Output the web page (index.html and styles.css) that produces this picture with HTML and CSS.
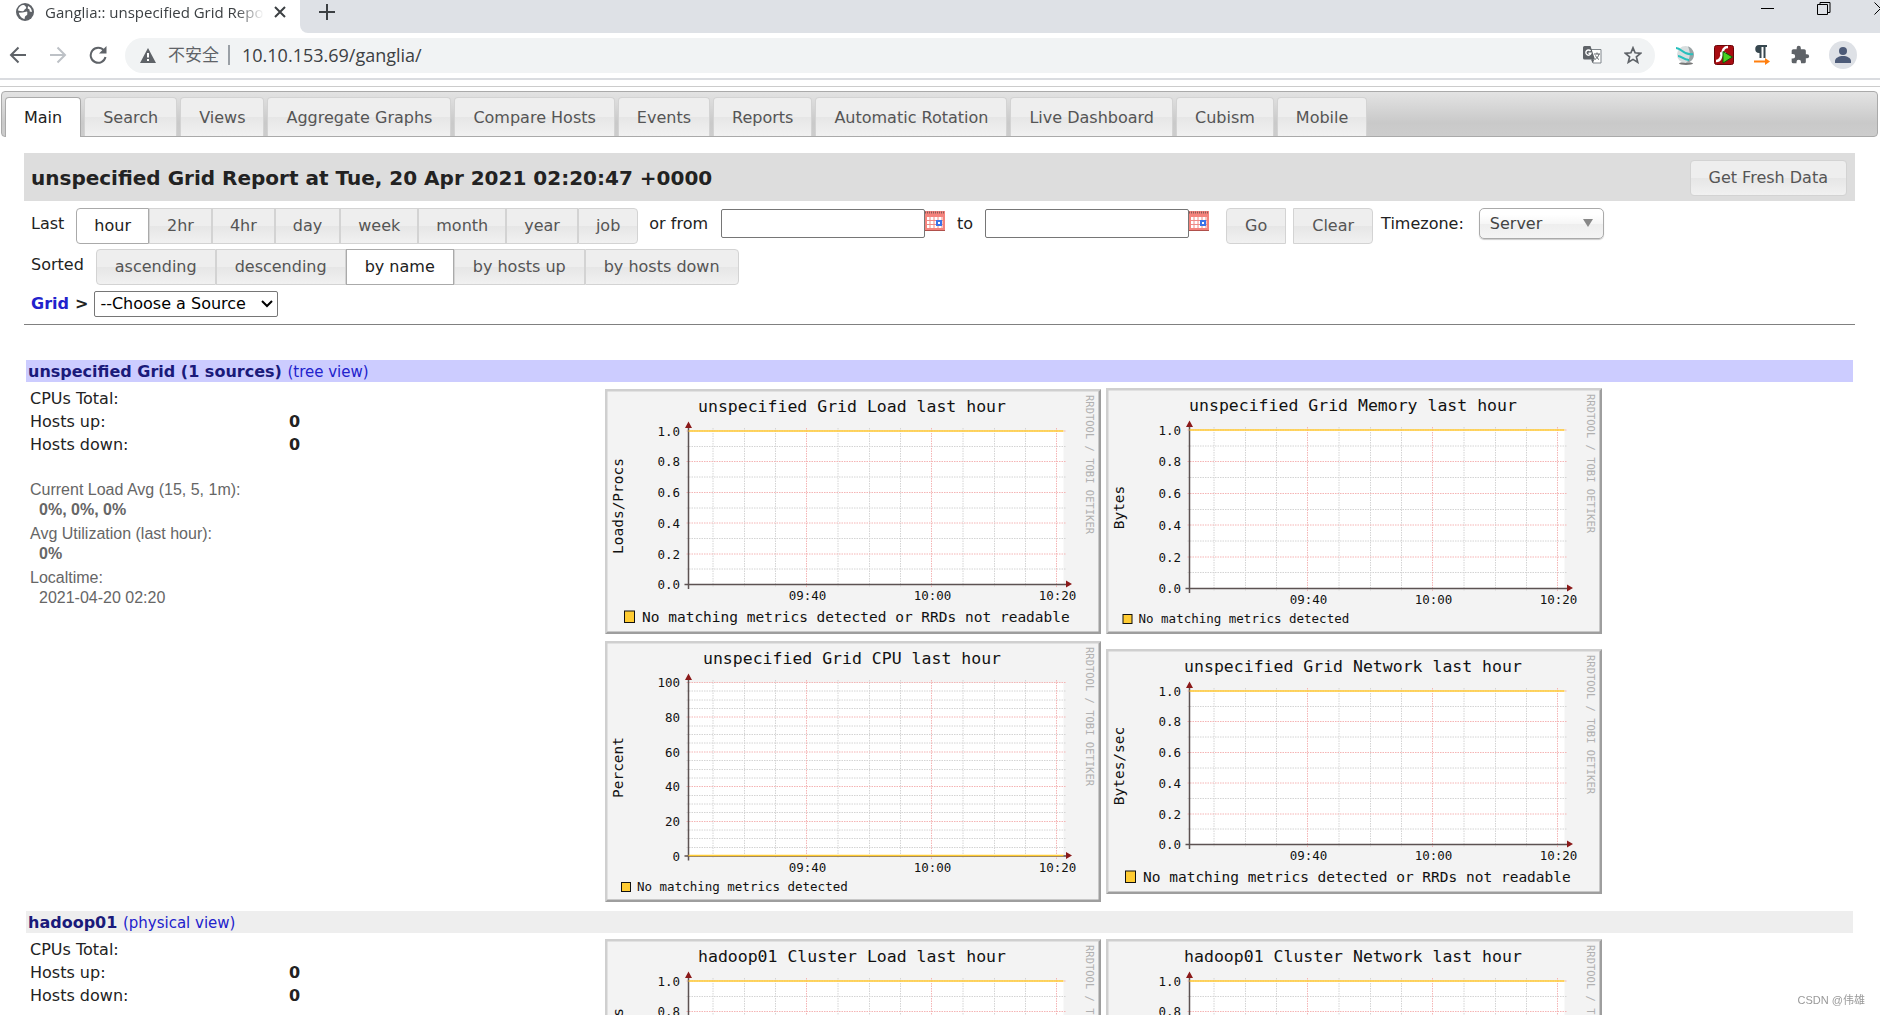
FILE: index.html
```html
<!DOCTYPE html>
<html lang="en">
<head>
<meta charset="utf-8">
<title>Ganglia:: unspecified Grid Report</title>
<link rel="stylesheet" href="styles.css">
</head>
<body>
<header class="browser">
  <div class="tabstrip">
    <div class="tab">
      <svg class="favicon" viewBox="0 0 18 18"><circle cx="9" cy="9" r="9" fill="#5f6368"/><path d="M8 2C5 2 2.500 4 2 7.500c2 .5 3.500 1 5 .8 1.500-.3 1-2 2.300-2.300C10.500 5.500 11 4 8 2zM11 8.500c-1.500 0-2.500 1-4.500 1l-3.700.3C3.500 13 6 15.800 8.500 16c.5-1 0-2.200 1-3 1.200-.6 2-1.200 1.800-2.300-.1-.8.4-1.200-.3-2.200zM12 3l-.3 2.500 1.800 1 .2 2 2.200.5C16 6.500 14.500 4.200 12 3z" fill="#fff"/></svg>
      <span class="tab-title">Ganglia:: unspecified Grid Report</span>
      <button class="icon-btn" aria-label="Close tab"><svg width="12" height="12" viewBox="0 0 12 12"><path d="M1 1l10 10M11 1L1 11" stroke="#3c4043" stroke-width="2"/></svg></button>
    </div>
    <div class="strip-rest">
      <button class="icon-btn new-tab" aria-label="New tab"><svg width="16" height="16" viewBox="0 0 16 16"><path d="M8 0v16M0 8h16" stroke="#3c4043" stroke-width="2"/></svg></button>
      <div class="window-controls">
        <button class="icon-btn" aria-label="Minimize"><svg width="13" height="14" viewBox="0 0 13 14"><path d="M0 6.500h13" stroke="#000"/></svg></button>
        <button class="icon-btn" aria-label="Restore"><svg width="14" height="14" viewBox="0 0 14 14" fill="none" stroke="#000"><path d="M.5 2.500h10v10H.5zM3 2.500v-2h10v10h-2.500"/></svg></button>
        <button class="icon-btn" aria-label="Close"><svg width="13" height="14" viewBox="0 0 13 14"><path d="M.5 .5l12 12M12.500 .5l-12 12" stroke="#000"/></svg></button>
      </div>
    </div>
  </div>
  <div class="toolbar">
    <button class="icon-btn" aria-label="Back"><svg width="18" height="18" viewBox="0 0 18 18" fill="none" stroke="#5f6368" stroke-width="2"><path d="M17 9H2M9.500 1.500L2 9l7.500 7.500"/></svg></button>
    <button class="icon-btn" aria-label="Forward"><svg width="18" height="18" viewBox="0 0 18 18" fill="none" stroke="#bdc1c6" stroke-width="2"><path d="M1 9h15M8.500 1.500L16 9l-7.500 7.500"/></svg></button>
    <button class="icon-btn" aria-label="Reload"><svg width="18" height="18" viewBox="0 0 18 18"><path d="M15 4.500A7.500 7.500 0 1 0 16.500 11" fill="none" stroke="#5f6368" stroke-width="2"/><path d="M17.500 0v7.500H10z" fill="#5f6368"/></svg></button>
    <div class="omnibox">
      <svg width="16" height="15" viewBox="0 0 16 15"><path d="M8 0l8 15H0z" fill="#5f6368"/><path d="M8 5v4.500M8 11v2" stroke="#fff" stroke-width="2"/></svg>
      <span class="insecure">不安全</span>
      <input class="url" type="text" aria-label="Address" value="10.10.153.69/ganglia/">
      <button class="icon-btn" aria-label="Translate"><svg width="19" height="18" viewBox="0 0 19 18"><path d="M8 3.500h10v13.500h-8z" fill="#fff" stroke="#80868b"/><path d="M1.500 0h6l4.500 13.500H1.500A1.500 1.500 0 0 1 0 12V1.500A1.500 1.500 0 0 1 1.500 0z" fill="#5f6368"/><path d="M8 13.500h3.500l-2 3.500z" fill="#5f6368"/><path d="M7.500 5A2.600 2.600 0 1 0 8 7.200H5.500" fill="none" stroke="#fff" stroke-width="1.400"/><path d="M11 8h6M14 6.500V8M16 8c-.5 2.500-2 4-4 5.500M12.500 9.500c1 2 2 3 3.500 4" fill="none" stroke="#5f6368"/></svg></button>
      <button class="icon-btn" aria-label="Bookmark"><svg width="18" height="18" viewBox="0 0 18 18"><path d="M9 1.800l2.100 5 5.500.5-4.200 3.600 1.300 5.400L9 13.400l-4.700 2.900 1.300-5.400-4.200-3.600 5.500-.5z" fill="none" stroke="#5f6368" stroke-width="1.700"/></svg></button>
    </div>
    <div class="extensions">
      <button class="icon-btn" aria-label="Planet"><svg width="20" height="20" viewBox="0 0 20 20"><ellipse cx="11" cy="18.500" rx="7" ry="1.500" fill="#777"/><circle cx="10.500" cy="9.500" r="8.500" fill="#d8dedf"/><path d="M13 1.500a8.500 8.500 0 0 1 4 13.500c-2 2-4 3-6 3 4-3 5-10 2-16.500z" fill="#9aa3a5"/><path d="M1 3c6 0 7 8 17 6M3 11c4 0 5 4 11 4" fill="none" stroke="#27c0bd" stroke-width="2"/></svg></button>
      <button class="icon-btn" aria-label="Flash player"><svg width="20" height="20" viewBox="0 0 20 20"><rect x=".5" y=".5" width="19" height="19" rx="2" fill="#a80d12" stroke="#6b0508"/><path d="M14 2c-6 0-5 6-7 10-1 3-2 4-5 4M6 8.500h6" fill="none" stroke="#fff" stroke-width="2.500"/><path d="M9 6.500l9.500 5.500L9 18z" fill="#4bd321" stroke="#0b5c08"/></svg></button>
      <button class="icon-btn" aria-label="Paragraph direction"><svg width="18" height="20" viewBox="0 0 18 20"><path d="M6 0h8v2h-1.500v11h-2V2H8.500v11h-2V8A4 4 0 0 1 6 0z" fill="#37474f"/><path d="M1 16.500h12" stroke="#ff7f0e" stroke-width="2"/><path d="M12 13l5 3.500-5 3.500z" fill="#ff7f0e"/></svg></button>
      <button class="icon-btn" aria-label="Extensions"><svg width="20" height="20" viewBox="0 0 24 24"><path d="M20.500 11H19V7a2 2 0 0 0-2-2h-4V3.500a2.500 2.500 0 0 0-5 0V5H4a2 2 0 0 0-2 2v3.800h1.500a2.700 2.700 0 0 1 0 5.400H2V20a2 2 0 0 0 2 2h3.800v-1.500a2.700 2.700 0 0 1 5.400 0V22H17a2 2 0 0 0 2-2v-4h1.500a2.500 2.500 0 0 0 0-5z" fill="#5f6368"/></svg></button>
      <button class="icon-btn" aria-label="Profile"><svg width="28" height="28" viewBox="0 0 28 28"><circle cx="14" cy="14" r="14" fill="#dee1e6"/><circle cx="14" cy="10" r="4" fill="#4d5b78"/><path d="M6 22v-2c0-3 4-5 8-5s8 2 8 5v2z" fill="#4d5b78"/></svg></button>
    </div>
  </div>
</header>

<nav class="nav">
  <a class="nav-tab active" href="#">Main</a>
  <a class="nav-tab" href="#">Search</a>
  <a class="nav-tab" href="#">Views</a>
  <a class="nav-tab" href="#">Aggregate Graphs</a>
  <a class="nav-tab" href="#">Compare Hosts</a>
  <a class="nav-tab" href="#">Events</a>
  <a class="nav-tab" href="#">Reports</a>
  <a class="nav-tab" href="#">Automatic Rotation</a>
  <a class="nav-tab" href="#">Live Dashboard</a>
  <a class="nav-tab" href="#">Cubism</a>
  <a class="nav-tab" href="#">Mobile</a>
</nav>

<main class="content">
  <div class="report-bar">
    <h1>unspecified Grid Report at Tue, 20 Apr 2021 02:20:47 +0000</h1>
    <button class="btn">Get Fresh Data</button>
  </div>

  <div class="controls">
    <div class="control-row">
      <span class="row-label">Last</span>
      <div class="btn-group range">
        <button class="btn on">hour</button><button class="btn">2hr</button><button class="btn">4hr</button><button class="btn">day</button><button class="btn">week</button><button class="btn">month</button><button class="btn">year</button><button class="btn">job</button>
      </div>
      <label class="from-label" for="from">or from</label>
      <input class="date" id="from" type="text">
      <button class="icon-btn cal" aria-label="Pick start date"><svg width="20" height="20" viewBox="0 0 20 20"><use href="#calendar"/></svg></button>
      <label class="to-label" for="to">to</label>
      <input class="date" id="to" type="text">
      <button class="icon-btn cal" aria-label="Pick end date"><svg width="20" height="20" viewBox="0 0 20 20"><use href="#calendar"/></svg></button>
      <div class="actions"><button class="btn left-end">Go</button><button class="btn right-end">Clear</button></div>
      <label class="tz-label" for="tz">Timezone:</label>
      <div class="tz-wrap"><select class="tz" id="tz"><option>Server</option><option>Browser</option></select><svg class="tz-arrow" width="10" height="8" viewBox="0 0 10 8"><path d="M0 0h10L5 8z" fill="#888"/></svg></div>
    </div>
    <div class="control-row">
      <span class="row-label">Sorted</span>
      <div class="btn-group sort">
        <button class="btn">ascending</button><button class="btn">descending</button><button class="btn on">by name</button><button class="btn">by hosts up</button><button class="btn">by hosts down</button>
      </div>
    </div>
    <div class="source-row">
      <a href="#">Grid</a><b>&gt;</b>
      <div class="source-wrap"><select class="source" aria-label="Source"><option>--Choose a Source</option><option>hadoop01</option></select><svg class="source-arrow" width="12" height="8" viewBox="0 0 12 8"><path d="M1 1l5 5 5-5" fill="none" stroke="#000" stroke-width="2"/></svg></div>
    </div>
  </div>

  <section class="source-block">
    <h2 class="block-head grid-head"><a class="name" href="#">unspecified Grid (1 sources)</a> <a class="view" href="#">(tree view)</a></h2>
    <div class="block-body">
      <div class="stats">
        <table class="hosts">
          <tr><th scope="row">CPUs Total:</th><td></td></tr>
          <tr><th scope="row">Hosts up:</th><td>0</td></tr>
          <tr><th scope="row">Hosts down:</th><td>0</td></tr>
        </table>
        <dl class="load">
          <dt>Current Load Avg (15, 5, 1m):</dt><dd><b>0%, 0%, 0%</b></dd>
          <dt>Avg Utilization (last hour):</dt><dd><b>0%</b></dd>
          <dt>Localtime:</dt><dd>2021-04-20 02:20</dd>
        </dl>
      </div>
      <div class="graphs">
        <a href="#" class="graph" data-kind="long" data-title="unspecified Grid Load last hour" data-unit="Loads/Procs"></a>
        <a href="#" class="graph" data-kind="memory" data-title="unspecified Grid Memory last hour" data-unit="Bytes"></a>
        <a href="#" class="graph" data-kind="cpu" data-title="unspecified Grid CPU last hour" data-unit="Percent"></a>
        <a href="#" class="graph" data-kind="long" data-title="unspecified Grid Network last hour" data-unit="Bytes/sec"></a>
      </div>
    </div>
  </section>

  <section class="source-block">
    <h2 class="block-head cluster-head"><a class="name" href="#">hadoop01</a> <a class="view" href="#">(physical view)</a></h2>
    <div class="block-body">
      <div class="stats">
        <table class="hosts">
          <tr><th scope="row">CPUs Total:</th><td></td></tr>
          <tr><th scope="row">Hosts up:</th><td>0</td></tr>
          <tr><th scope="row">Hosts down:</th><td>0</td></tr>
        </table>
      </div>
      <div class="graphs">
        <a href="#" class="graph" data-kind="long" data-title="hadoop01 Cluster Load last hour" data-unit="Loads/Procs"></a>
        <a href="#" class="graph" data-kind="long" data-title="hadoop01 Cluster Network last hour" data-unit="Bytes/sec"></a>
      </div>
    </div>
  </section>
</main>

<div class="watermark">CSDN @伟雄</div>

<svg class="defs" aria-hidden="true">
  <symbol id="calendar" viewBox="0 0 20 20">
    <rect width="20" height="20" fill="#f4837c"/>
    <path d="M0 1.500h20" stroke="#8b5a56" stroke-width="2" stroke-dasharray="1 1"/>
    <path d="M2 6h16v11H2z" fill="#fff"/>
    <path d="M2 9.500h16M2 13.500h16M5 6v11M9 6v11M13 6v11M17 6v11" stroke="#ee8a85"/>
    <path d="M0 19.500h20" stroke="#b0504b"/>
    <rect x="12" y="10" width="4" height="4" fill="#fff" stroke="#3b74e8" stroke-width="2"/>
  </symbol>
</svg>
<script src="graphs.js"></script>
</body>
</html>
```
FILE: styles.css
```css
* { box-sizing: border-box; }
body {
  margin: 0;
  height: 100vh;
  overflow: hidden;
  background: #fff;
  color: #222;
  font: 16px/22px Verdana, "DejaVu Sans", sans-serif;
}
button, input, select { font: inherit; margin: 0; }
a { color: #2222cc; text-decoration: none; }
svg { display: block; }
.defs { position: absolute; width: 0; height: 0; }

.icon-btn { border: 0; padding: 0; background: none; display: flex; align-items: center; flex: none; }

/* Browser window frame */
.browser { border-bottom: 2px solid #dadce0; font-family: "Segoe UI", "Open Sans", "Noto Sans CJK SC", sans-serif; }
.tabstrip { display: flex; height: 33px; background: #fff; overflow: hidden; }
.tab { display: flex; align-items: center; width: 300px; padding: 0 14px 9px 16px; }
.favicon { width: 18px; height: 18px; flex: none; }
.tab-title {
  flex: 1;
  margin: 0 10px 0 11px;
  overflow: hidden;
  white-space: nowrap;
  font-size: 15px;
  color: #3c4043;
  -webkit-mask-image: linear-gradient(to left, transparent, #000 28px);
}
.strip-rest { display: flex; flex: 1; border-bottom-left-radius: 8px; background: #dee1e6; }
.new-tab { padding: 0 19px 9px; }
.window-controls { display: flex; gap: 43px; align-items: flex-start; margin: 2px -7px 0 auto; }
.toolbar { display: flex; align-items: center; height: 45px; padding: 0 23px 1px 9px; }
.toolbar > .icon-btn { margin-right: 22px; }
.omnibox {
  display: flex;
  align-items: center;
  flex: 1;
  height: 35px;
  margin: 0 20px 0 -4px;
  padding: 0 13px 0 15px;
  border-radius: 18px;
  background: #f1f3f4;
}
.insecure { margin: 0 12px 0 12px; padding-right: 9px; border-right: 2px solid #9aa0a6; font-size: 17px; line-height: 20px; color: #5f6368; }
.url { flex: 1; border: 0; padding: 0; outline: 0; background: none; color: #3c4043; font-size: 18px; }
.omnibox .icon-btn + .icon-btn { margin-left: 22px; }
.extensions { display: flex; align-items: center; gap: 19px; }

/* Navigation tabs */
.nav {
  position: relative;
  display: flex;
  gap: 3px;
  height: 46px;
  margin: 11px 2px 0 1px;
  padding: 5px 3px 0;
  border: 1px solid #aaa;
  border-radius: 4px;
  background: linear-gradient(#e3e3e3, #c9c9c9 70%, #cdcdcd);
}
.nav::before { content: ""; position: absolute; left: -2px; right: -3px; top: -6px; border-top: 1px solid #ccc; }
.nav-tab {
  padding: 0 18px;
  border: 1px solid #d3d3d3;
  border-bottom: 0;
  border-radius: 4px 4px 0 0;
  background: linear-gradient(#eee 50%, #e6e6e6 50%, #f1f1f1);
  color: #555;
  line-height: 39px;
  white-space: nowrap;
}
.nav-tab.active { margin-bottom: -1px; border-color: #aaa; background: #fff; color: #212121; }

/* Page body */
.content { padding: 16px 25px 0 24px; }
.btn {
  height: 36px;
  padding: 0 18px;
  border: 1px solid #d3d3d3;
  border-radius: 4px;
  background: linear-gradient(#eee 50%, #e6e6e6 50%, #f1f1f1);
  color: #555;
  white-space: nowrap;
}
.btn.on { border-color: #aaa; background: #fff; color: #212121; }
.report-bar { display: flex; align-items: center; justify-content: space-between; height: 48px; padding: 1px 8px 0 7px; background: #ddd; }
.report-bar h1 { margin: 0; font-size: 20px; line-height: 24px; }

.controls { padding: 7px 0 7px 7px; border-bottom: 1px solid #808080; }
.control-row { display: flex; margin-bottom: 5px; align-items: flex-start; }
.row-label, .from-label, .to-label, .tz-label { line-height: 32px; white-space: nowrap; }
.btn-group { display: flex; margin-left: 12px; }
.range .btn { padding: 0 17px; }
.btn-group .btn { border-radius: 0; }
.btn-group .btn:first-child { border-radius: 4px 0 0 4px; }
.btn-group .btn:last-child { border-radius: 0 4px 4px 0; }
.from-label { margin: 0 13px 0 11px; }
.to-label { margin: 0 12px; }
.date { width: 204px; height: 29px; margin-top: 1px; border: 1px solid #767676; border-radius: 2px; }
.cal { margin-top: 3px; }
.actions { display: flex; gap: 7px; margin: 0 8px 0 17px; }
.left-end { border-radius: 4px 0 0 4px; }
.right-end { border-radius: 0 4px 4px 0; }
.tz-wrap, .source-wrap { position: relative; }
.tz-wrap { margin-left: 15px; }
.tz {
  width: 125px;
  height: 31px;
  padding: 0 10px;
  appearance: none;
  border: 1px solid #aaa;
  border-radius: 5px;
  background: linear-gradient(#fff 20%, #f6f6f6 50%, #eee 52%, #f4f4f4);
  box-shadow: 0 1px 1px #ccc;
  color: #444;
}
.tz-arrow { position: absolute; right: 11px; top: 11px; pointer-events: none; }
.source-row { display: flex; align-items: center; gap: 6px; padding-top: 1px; font-weight: bold; }
.source { width: 184px; height: 26px; padding: 0 5px; appearance: none; border: 1px solid #767676; border-radius: 2px; background: #fff; color: #000; font-weight: normal; }
.source-arrow { position: absolute; right: 5px; top: 9px; pointer-events: none; }

/* Source blocks */
.source-block { margin: 0 2px; }
.controls + .source-block { margin-top: 35px; }
.block-head { margin: 0; padding: 1px 2px 0; font-size: 16px; line-height: 21px; }
.grid-head { background: #ccccff; }
.cluster-head { background: #eee; }
.block-head .name { color: #1a1a7a; }
.block-head .view { font-size: 15px; line-height: 15px; font-weight: normal; }
.block-body { display: flex; padding: 6px 0 9px; }
.stats { width: 579px; margin-top: -1px; padding: 0 4px; flex: none; }
.hosts { border-collapse: collapse; line-height: 23px; }
.hosts th { width: 259px; padding: 0; text-align: left; font-weight: normal; }
.hosts td { padding: 0; height: 23px; font-weight: bold; }
.load { margin: 24px 0 0; font-family: Arial, "Liberation Sans", sans-serif; line-height: 20px; color: #666; }
.load dd { margin: 0 0 4px 9px; }
.graphs { display: grid; grid-template-columns: 496px 496px; gap: 7px 5px; align-items: center; }
.graph { display: block; }
.graph svg { width: 100%; height: auto; }
.graph text { font-family: "DejaVu Sans Mono", monospace; fill: #111; }
.graph .g-title { font-size: 33px; text-anchor: middle; }
.graph .g-long { font-size: 29px; }
.graph .g-small { font-size: 25px; }
.graph .g-mark { font-size: 21px; fill: #b0b0b0; }
.graph .g-end { text-anchor: end; }
.graph .g-mid { text-anchor: middle; }
.graph .minor { fill: none; stroke: #d4d4d4; stroke-width: 2; stroke-dasharray: 3 2; }
.graph .major { fill: none; stroke: #f5b5b5; stroke-width: 2; stroke-dasharray: 3 2; }
.graph .axis { fill: none; stroke: #5c5252; stroke-width: 3; }

.watermark { position: fixed; right: 15px; bottom: 5px; font: 11px/20px Arial, "Liberation Sans", "Noto Sans CJK SC", sans-serif; color: #999; }
```
FILE: graphs.js
```js
// Draws the RRD graphs. One unit is half a pixel.
const kinds = {
  long: {
    height: 490, ticks: ["1.0", "0.8", "0.6", "0.4", "0.2", "0.0"], top: 84, base: 391, steps: 10, every: 2, line: "top",
    legend: "No matching metrics detected or RRDs not readable", cls: "g-long", box: [39, 444, 20, 23], tx: 74, ty: 466
  },
  memory: {
    height: 492, ticks: ["1.0", "0.8", "0.6", "0.4", "0.2", "0.0"], top: 84, base: 401, steps: 10, every: 2, line: "top",
    legend: "No matching metrics detected", cls: "g-small", box: [34, 453, 18, 18], tx: 65, ty: 470
  },
  cpu: {
    height: 522, ticks: ["100", "80", "60", "40", "20", "0"], top: 83, base: 430, steps: 20, every: 4, line: "base",
    legend: "No matching metrics detected", cls: "g-small", box: [33, 483, 18, 18], tx: 64, ty: 500
  }
};
const minorX = [216, 279, 341, 466, 529, 591, 716, 779, 841];
const majorX = [[403, "09:40"], [653, "10:00"], [903, "10:20"]];

document.querySelectorAll(".graph").forEach(el => {
  const k = kinds[el.dataset.kind], h = k.height, b = k.base;
  let minor = minorX.map(x => `M${x} 78V${b + 4}`).join("");
  let major = majorX.map(([x]) => `M${x} 78V${b + 7}`).join("");
  let labels = "";
  for (let i = 0; i <= k.steps; i++) {
    const y = Math.round(k.top + (b - k.top) * i / k.steps);
    if (i % k.every) {
      minor += `M163 ${y}H921`;
    } else {
      major += `M163 ${y}H921`;
      labels += `<text class="g-small g-end" x="150" y="${y + 9}">${k.ticks[i / k.every]}</text>`;
    }
  }
  const times = majorX.map(([x, t]) => `<text class="g-small g-mid" x="${x + 2}" y="${b + 31}">${t}</text>`).join("");
  const lineY = k.line === "top" ? k.top : b - 1;
  const mid = Math.round((k.top + b) / 2) - 4;
  const [bx, by, bw, bh] = k.box;
  el.innerHTML = `<svg viewBox="0 0 992 ${h}">
    <path d="M0 0H992V${h}H0z" fill="#f3f3f3"/>
    <path d="M0 0H992L987 5H5V${h - 5}L0 ${h}z" fill="#cfcfcf"/>
    <path d="M992 0V${h}H0L5 ${h - 5}H987V5z" fill="#9e9e9e"/>
    <path d="M167 84H917V${b}H167z" fill="#fff"/>
    <path class="minor" d="${minor}"/><path class="major" d="${major}"/>
    <path class="axis" d="M159 ${b}H925M167 72V${b + 9}"/>
    <path d="M167 ${lineY}H917" stroke="#ffcc33" stroke-width="3"/>
    <path d="M160 78L167 65L174 78zM922 ${b - 8}L934 ${b - 1}L922 ${b + 6}z" fill="#8b1a1a"/>
    <text class="g-title" x="494" y="45">${el.dataset.title}</text>${labels}${times}
    <text class="g-long g-mid" transform="translate(36 ${mid}) rotate(-90)">${el.dataset.unit}</text>
    <text class="g-mark" transform="translate(961 12) rotate(90)">RRDTOOL / TOBI OETIKER</text>
    <rect x="${bx}" y="${by}" width="${bw}" height="${bh}" fill="#ffcc33" stroke="#111" stroke-width="2"/>
    <text class="${k.cls}" x="${k.tx}" y="${k.ty}">${k.legend}</text>
  </svg>`;
});
```
